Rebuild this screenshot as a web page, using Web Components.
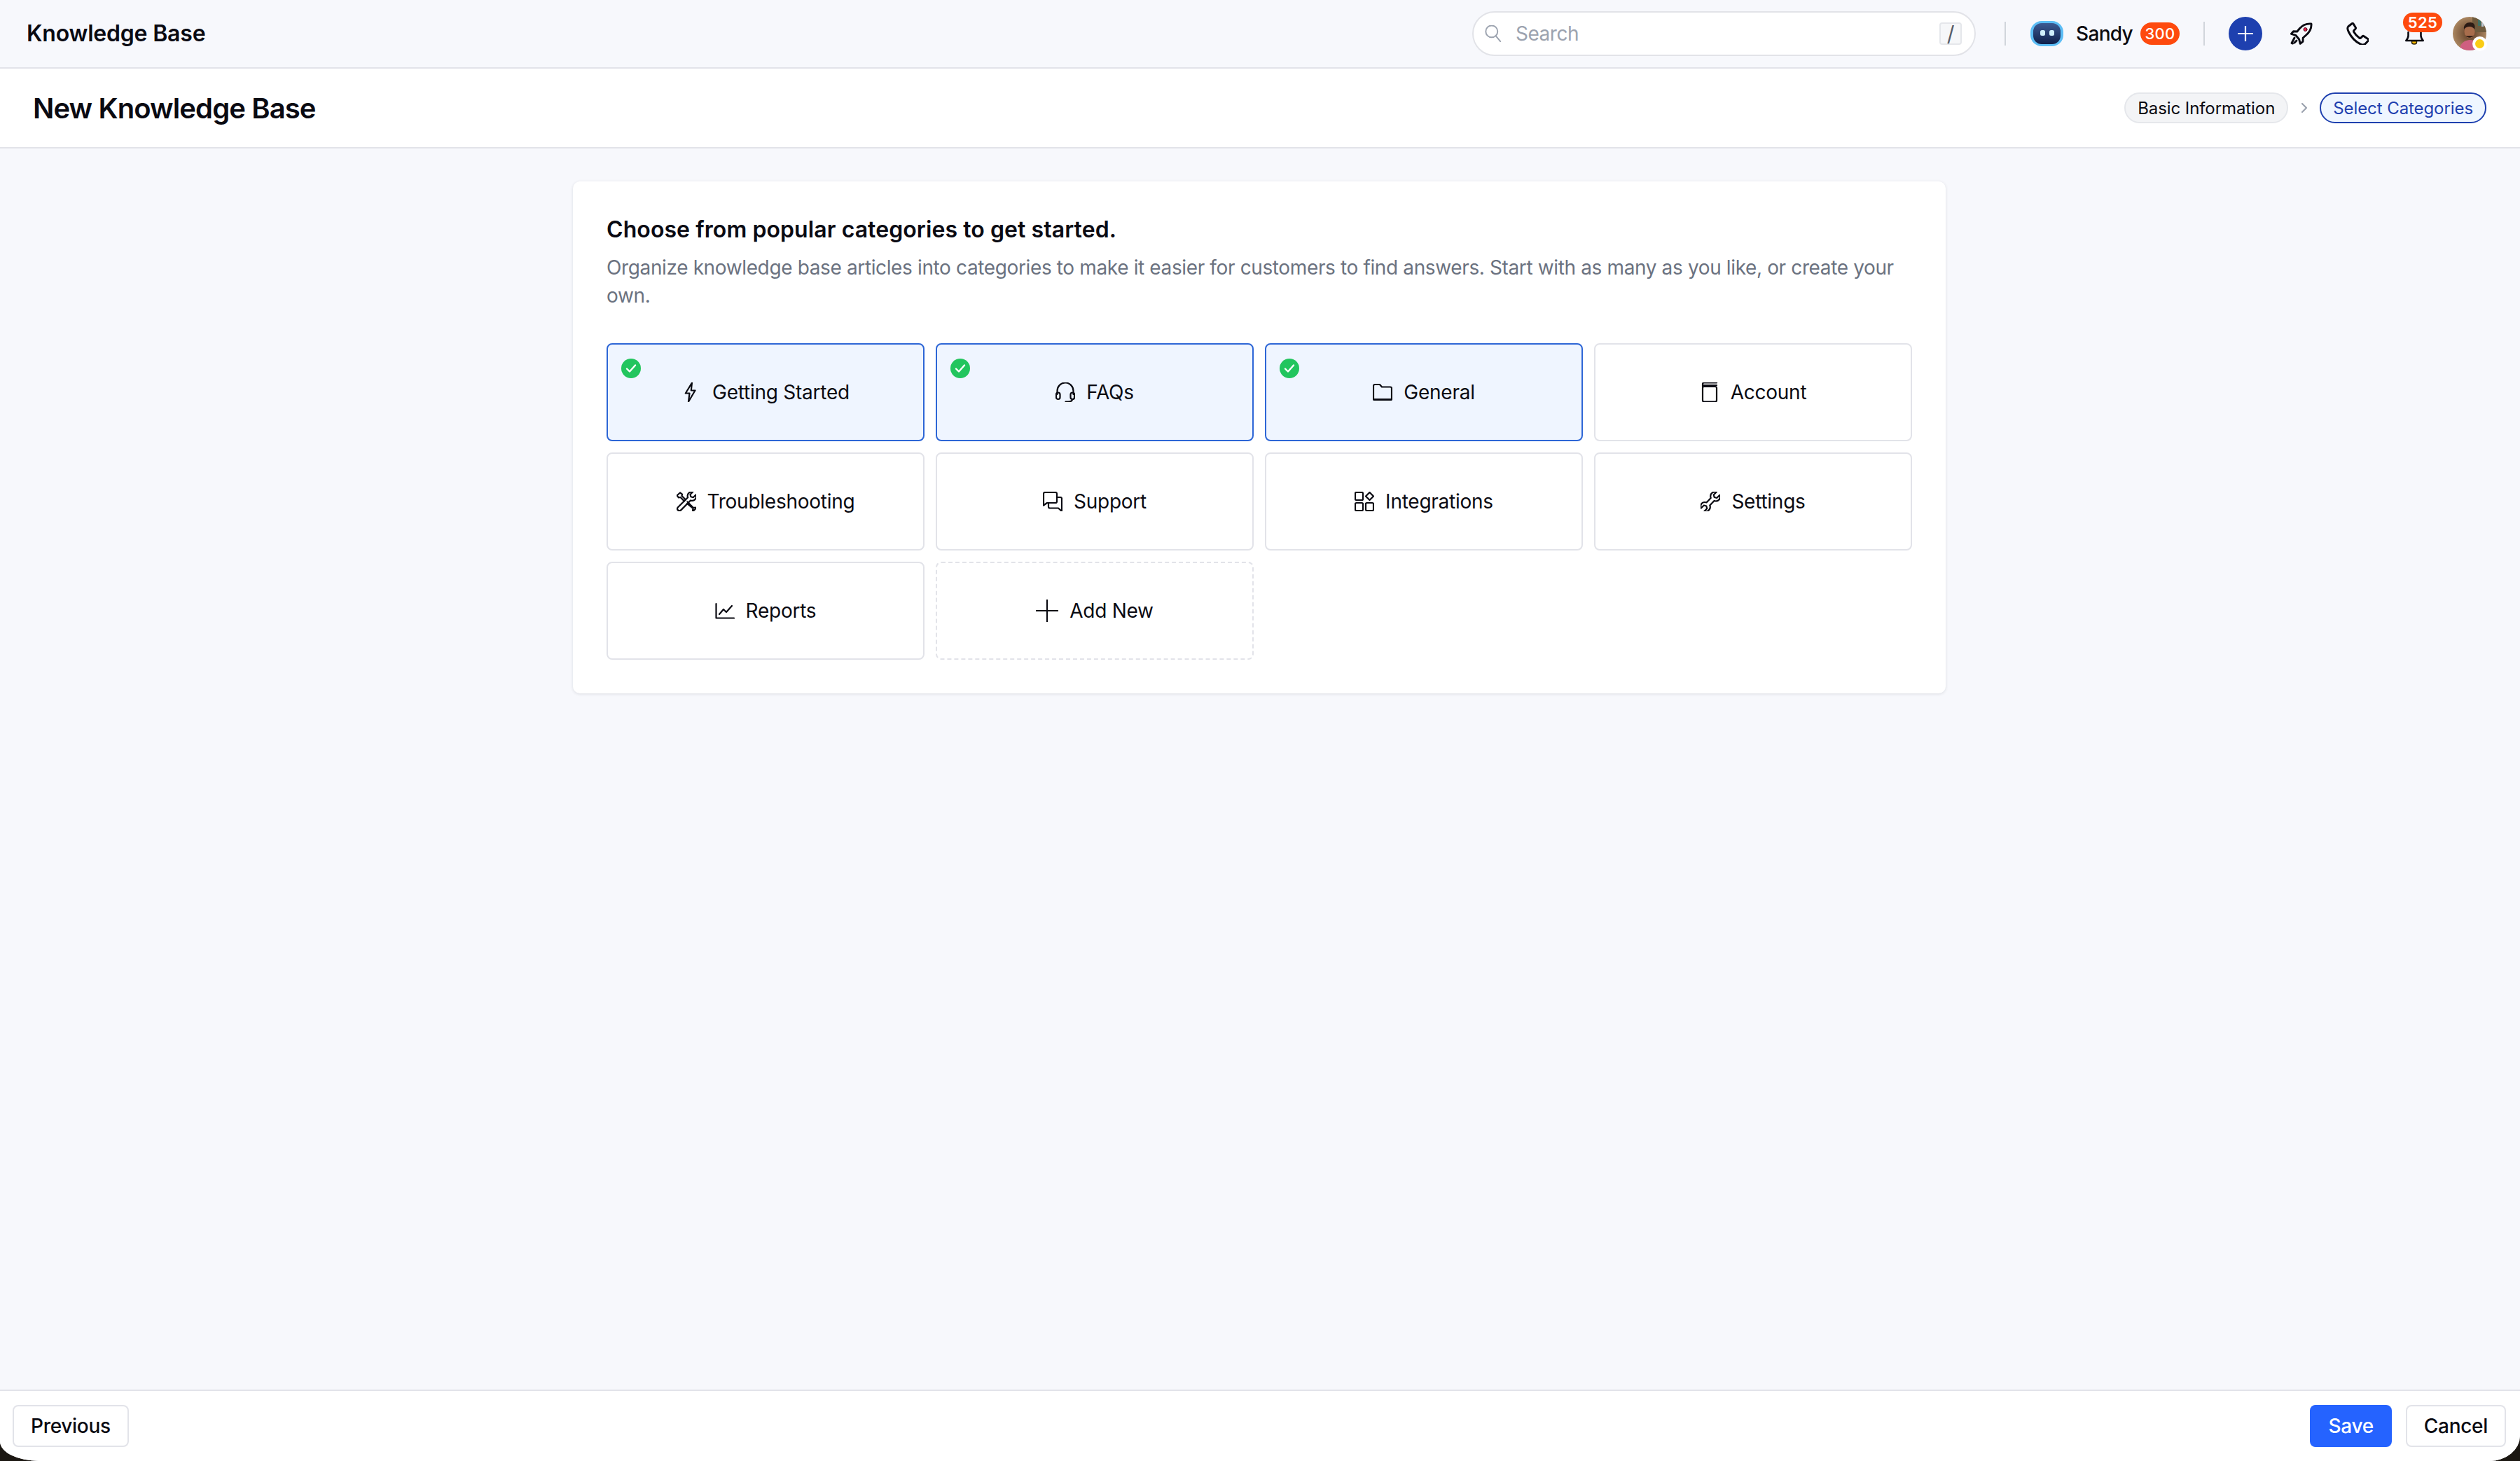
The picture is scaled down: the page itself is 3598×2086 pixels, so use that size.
<!DOCTYPE html>
<html lang="en"><head><meta charset="utf-8"><title>New Knowledge Base</title>
<style>
html,body{margin:0;padding:0;height:100%;background:#1b1712;}
body{font-family:Inter,"Noto Sans",sans-serif;color:#0a0a0f;}
</style></head><body>
<kb-app>
  <kb-topbar slot="top" heading="Knowledge Base"></kb-topbar>
  <kb-pagehead slot="head" heading="New Knowledge Base">
    <kb-step>Basic Information</kb-step>
    <kb-step active>Select Categories</kb-step>
  </kb-pagehead>
  <kb-card heading="Choose from popular categories to get started." desc="Organize knowledge base articles into categories to make it easier for customers to find answers. Start with as many as you like, or create your own.">
    <kb-tile selected icon="bolt">Getting Started</kb-tile>
    <kb-tile selected icon="headset">FAQs</kb-tile>
    <kb-tile selected icon="folder">General</kb-tile>
    <kb-tile icon="book">Account</kb-tile>
    <kb-tile icon="tools">Troubleshooting</kb-tile>
    <kb-tile icon="chat">Support</kb-tile>
    <kb-tile icon="apps">Integrations</kb-tile>
    <kb-tile icon="wrench">Settings</kb-tile>
    <kb-tile icon="chart">Reports</kb-tile>
    <kb-tile dashed icon="plus" style="--s:32px">Add New</kb-tile>
  </kb-card>
  <kb-footer slot="foot">
    <kb-button slot="left">Previous</kb-button>
    <kb-button slot="right" primary>Save</kb-button>
    <kb-button slot="right">Cancel</kb-button>
  </kb-footer>
</kb-app>
<script>
const ICONS={
 bolt:'<path d="M17 2.500 7.800 17.500H13.500L12 29.500 21.500 13.500H15.800Z"/>',
 headset:'<path d="M4.500 19v-5a11.500 11.500 0 0 1 23 0v5"/><rect x="3" y="16.500" width="5.500" height="9.500" rx="2.700"/><rect x="23.500" y="16.500" width="5.500" height="9.500" rx="2.700"/><path d="M26 26c0 2.600-3 3.500-6 3.500h-3.500"/>',
 folder:'<path d="M3 7a2 2 0 0 1 2-2h7l3 3.500h12a2 2 0 0 1 2 2V25a2 2 0 0 1-2 2H5a2 2 0 0 1-2-2Z"/><path d="M3.500 26.500h25" stroke-width="2.800"/>',
 book:'<rect x="6" y="8" width="20" height="21.500" rx="2"/><path d="M6 8V4.500a2 2 0 0 1 2-2h18M6 6h20"/>',
 tools:'<path d="M13 15.500 7.500 10 5 10.500 2.500 7.500 7 3.500l3 2.200-.5 2.300 5.500 5.500"/><path d="M17.500 16.500 26 25l3-.5 .5 1.500-3.500 3.500-1-.5.500-3L17 19"/><path d="M29.500 6.500l-3.800 3.700-3.300-.9-.9-3.300L25.200 2.300c-3.800-1-7.600 1.900-7.600 5.700 0 .9.200 1.600.5 2.300L4 24.200c-1.200 1.200-1.200 3 0 4.200s3 1.200 4.200 0L22 14.400c.7.300 1.400.5 2.300.5 3.800 0 6.700-3.800 5.200-8.400Z"/>',
 chat:'<path d="M3 5a2 2 0 0 1 2-2h15a2 2 0 0 1 2 2v11a2 2 0 0 1-2 2H8l-5 3.500Z"/><path d="M22 10h5a2 2 0 0 1 2 2v18l-5-4.500H12a2 2 0 0 1-2-2V18"/>',
 apps:'<rect x="3" y="3" width="11" height="11" rx="1.500"/><path d="M23.500 3 29 8.500 23.500 14 18 8.500Z"/><rect x="3" y="18" width="11" height="11" rx="1.500"/><rect x="18" y="18" width="11" height="11" rx="1.500"/>',
 wrench:'<path d="M29.200 7l-4 4-3.500-1-1-3.500 4-4c-4-1.200-8.500 1.700-8.500 6 0 1 .2 1.700.5 2.500L10.500 17.500c-.8-.3-1.500-.5-2.500-.5-4.300 0-7 4-5.200 8.500l4-4 3.500 1 1 3.500-4 4c4 1.200 8.500-1.700 8.500-6 0-1-.2-1.700-.5-2.500L21.500 15c.8.300 1.500.5 2.500.5 4.300 0 7-4 5.200-8.500Z"/>',
 chart:'<path d="M3.500 6v20.500H29"/><path d="M8 21l6-7 4 4 8-9"/>',
 plus:'<path d="M16 0v32M0 16h32"/>',
 search:'<circle cx="13.500" cy="13" r="9.500"/><path d="M20 20l7.500 9"/>',
 phone:'<path d="M9 3.500 4.500 7c-1.500 1.500-1 4 .5 7 3 6 8.500 12 14.500 15 2.500 1.300 5 1 6.500-.5l3.500-3.800c.5-.6.4-1.500-.3-2l-5.200-3.500c-.6-.4-1.400-.3-1.900.2l-1.800 1.800c-.5.500-1.300.6-1.900.2-3-2-5.300-4.500-7-7.600-.3-.6-.2-1.400.3-1.900l1.700-1.800c.5-.5.5-1.200.2-1.800L11 4c-.4-.8-1.300-1-2-.5Z" stroke-width="2.600"/>',
};
const VIEW={plus:'0 0 32 32',search:'3 3 26 27',phone:'2 2 28 28'};
function define(name,css,html){
  customElements.define(name,class extends HTMLElement{
    connectedCallback(){
      if(this.shadowRoot)return;
      const s=this.attachShadow({mode:'open'});
      s.innerHTML='<style>'+css+'</style>'+(typeof html==='function'?html(this):html);
    }
  });
}
define('kb-icon',`:host{display:inline-flex;flex:none;width:var(--s,28px);height:var(--s,28px)}
 svg{width:100%;height:100%;fill:none;stroke:currentColor;stroke-width:var(--sw,2.200);stroke-linecap:round;stroke-linejoin:round;display:block}`,
 el=>{const n=el.getAttribute('name');return `<svg viewBox="${VIEW[n]||'2 2 28 28'}" aria-hidden="true">${ICONS[n]||''}</svg>`;});

define('kb-app',`:host{display:flex;flex-direction:column;height:100vh;overflow:hidden;background:#f7f8fc;
   border-radius:0 0 44px 56px / 0 0 36px 28px}
 .main{flex:1;min-height:0;display:flex;justify-content:center;align-items:flex-start;padding-top:47px}`,
 `<slot name="top"></slot><slot name="head"></slot><div class="main"><slot></slot></div><slot name="foot"></slot>`);

define('kb-topbar',`:host{display:flex;align-items:center;height:96px;box-sizing:content-box;border-bottom:2px solid #e2e3e9;background:#f7f8fc;padding:0 48px 0 38px}
 h1{margin:0;font-size:32px;font-weight:600;line-height:40px;letter-spacing:-.2px;flex:1;color:#0a0a12}
 .search{width:719px;height:64px;box-sizing:border-box;border:2px solid #e2e3e8;border-radius:32px;background:#fff;display:flex;align-items:center;padding:0 18px 0 16px;gap:20px;color:#9ca3af;font-size:28px;margin-right:41px}
 .search kb-icon{--s:24px;--sw:2.200;color:#9ca3af}
 .search span{flex:1;letter-spacing:-.5px}
 kbd{width:32px;height:32px;box-sizing:border-box;border:2px solid #e5e7eb;border-radius:4px;background:#f6f7f9;color:#565c68;font:400 30px/28px Inter,sans-serif;text-align:center}
 .sep{width:2px;height:34px;background:#d1d5db;flex:none}
 .user{display:flex;align-items:center;margin:0 34px 0 35px}
 .user svg{width:47px;height:36px;display:block;margin-right:18px}
 .user b{font-size:28px;font-weight:500;line-height:36px;margin-right:11px;letter-spacing:-.7px}
 .pill{display:inline-flex;align-items:center;justify-content:center;background:#fe4a0e;color:#fff;font-weight:500;border-radius:16px;font-size:22px;height:32px;width:56px;letter-spacing:.3px}
 .plus{width:48px;height:48px;border-radius:50%;background:#1e40af;color:#fff;display:flex;align-items:center;justify-content:center;margin-left:34px}
 .plus kb-icon{--s:22px;--sw:3.200}
 .ic{display:flex;color:#0a0a12;--s:32px}
 .rocket{margin-left:40px;width:32px}
 .phone{margin-left:48px;width:32px}
 .bell{position:relative;margin-left:52px;width:26px;height:32px}
 .bell svg{position:absolute;left:0;top:14px;width:27px;height:18px;overflow:visible}
 .bell .pill{position:absolute;left:-3px;top:-14px;height:28px;width:56px;border-radius:14px;font-weight:600;font-size:22px}
 .avatar{position:relative;margin-left:42px;width:48px;height:48px}
 .avatar svg{width:48px;height:48px;display:block;border-radius:50%}
 .avatar i{position:absolute;left:28px;top:28px;width:13px;height:13px;border-radius:50%;background:#facc15;border:4px solid #fff}`,
 el=>`<h1>${el.getAttribute('heading')}</h1>
 <div class="search"><kb-icon name="search"></kb-icon><span>Search</span><kbd>/</kbd></div>
 <div class="sep"></div>
 <div class="user"><svg viewBox="0 0 47 36"><defs><linearGradient id="bg" x1="0" y1="0" x2="0" y2="1"><stop offset="0" stop-color="#3c5a93"/><stop offset="1" stop-color="#0f1f4a"/></linearGradient></defs><rect x="0" y="0" width="47" height="36" rx="16" fill="#5cbdf5"/><rect x="4" y="3" width="39" height="30" rx="12" fill="url(#bg)"/><rect x="14" y="13" width="7" height="8" rx="2.500" fill="#cfeefc"/><rect x="27" y="13" width="7" height="8" rx="2.500" fill="#cfeefc"/></svg><b>Sandy</b><span class="pill">300</span></div>
 <div class="sep"></div>
 <div class="plus"><kb-icon name="plus"></kb-icon></div>
 <div class="ic rocket"><svg viewBox="0 0 32 32" width="32" height="32" fill="none" stroke="#0a0a12" stroke-width="2.900" stroke-linecap="round" stroke-linejoin="round"><path d="M30 2c-6-.5-12 1.500-16.500 6.500L9.800 13l-5.300-.2-3 3.500 6.200 2 5 6 1.500 6 3.800-3 .2-5.300 4.500-4C28 13.500 30.500 8 30 2Z"/><path d="M6 22l-4 7.500 1.500.5M9 26l-3 3"/><circle cx="21.500" cy="10" r="2.500" fill="#e11d48" stroke="#4a0d1e" stroke-width="1"/></svg></div>
 <div class="ic phone"><kb-icon name="phone"></kb-icon></div>
 <div class="bell"><svg viewBox="0 0 27 18" fill="none" stroke="#0a0a12" stroke-width="2.600" stroke-linecap="round" stroke-linejoin="round"><path d="M9.500 12.500v2c0 1.500 1.500 2.500 3.500 2.500s3.500-1 3.500-2.500v-2Z" fill="#f5b700" stroke="#2a2208" stroke-width="1.400"/><path d="M4.500 0v5c0 2.500-1.200 4.500-3.200 7h24.400C23.700 9.500 22.500 7.500 22.500 5V0"/></svg><span class="pill">525</span></div>
 <div class="avatar"><svg viewBox="0 0 48 48"><defs><radialGradient id="wall" cx=".5" cy=".5" r=".7"><stop offset="0" stop-color="#5c3a24"/><stop offset="1" stop-color="#c9a478"/></radialGradient></defs><rect width="48" height="48" fill="url(#wall)"/><rect x="28" y="0" width="20" height="22" fill="#6e5a3d"/><rect x="36" y="4" width="4" height="9" fill="#3f6f62"/><rect x="41" y="5" width="3" height="9" fill="#b9c7d6"/><path d="M10 48c0-10 6-14 14-15 8 0 15 4 16 15Z" fill="#cf5f80"/><ellipse cx="24" cy="21" rx="7.500" ry="9.500" fill="#a86d4c"/><path d="M16 18c-1-7 4-10 9-10s8 4 6 10c-2-3-4-4-7-4s-6 1-8 4Z" fill="#2b1b14"/><path d="M18 26c2 5 10 5 12 0-1 2-3 1-6 1s-5 1-6-1Z" fill="#2b1b14"/></svg><i></i></div>`);

define('kb-pagehead',`:host{display:flex;align-items:center;height:112px;box-sizing:content-box;background:#fff;border-bottom:2px solid #e2e3e9;padding:0 48px 0 47px;}
 h2{margin:0;font-size:40px;font-weight:600;line-height:50px;flex:1;color:#0a0a12;letter-spacing:-.9px;padding-top:1px}
 .steps{display:flex;align-items:center;gap:18px}`,
 el=>`<h2>${el.getAttribute('heading')}</h2><div class="steps"><slot></slot></div>`);

define('kb-step',`:host{display:inline-flex;align-items:center}
 .c{width:10px;height:18px;margin:0 17px 0 0;color:#9ca3af;display:none}
 :host([active]) .c{display:block}
 span{display:inline-flex;align-items:center;height:44px;box-sizing:border-box;padding:0 17px;border-radius:22px;border:2px solid #e5e7eb;background:#f3f4f6;color:#0a0a12;font-size:24px;font-weight:400;letter-spacing:-.08px}
 :host([active]) span{border-color:#1e40af;background:#eff6ff;color:#1e40af}`,
 `<svg class="c" viewBox="0 0 10 18" fill="none" stroke="currentColor" stroke-width="2.200" stroke-linecap="round" stroke-linejoin="round"><path d="M2 3l6 6-6 6"/></svg><span><slot></slot></span>`);

define('kb-card',`:host{display:block;width:1960px;margin-right:2px;box-sizing:border-box;background:#fff;border-radius:10px;padding:48px;box-shadow:0 1px 4px rgba(16,24,40,.12)}
 h3{margin:0 0 14px;font-size:32px;font-weight:600;line-height:41px;padding-top:0;color:#0a0a12;letter-spacing:.08px}
 p{margin:0 0 48px;font-size:28px;line-height:40px;color:#6b7280;letter-spacing:-.37px}
 .grid{display:grid;grid-template-columns:repeat(4,1fr);grid-auto-rows:140px;gap:16px}`,
 el=>`<h3>${el.getAttribute('heading')}</h3><p>${el.getAttribute('desc')}</p><div class="grid"><slot></slot></div>`);

define('kb-tile',`:host{position:relative;display:flex;align-items:center;justify-content:center;gap:16px;box-sizing:border-box;border:2px solid #e2e3e9;border-radius:8px;background:#fff;font-size:28px;line-height:40px;color:#0a0a12;letter-spacing:-.25px}
 :host([selected]){border-color:#2d66d6;background:#eff5ff}
 :host([dashed]){border-style:dashed}
 .chk{display:none;position:absolute;left:19px;top:20px;width:28px;height:28px}
 :host([selected]) .chk{display:block}`,
 el=>`<svg class="chk" viewBox="0 0 28 28"><circle cx="14" cy="14" r="14" fill="#22c55e"/><path d="M8 14.500l4 4 8-9" fill="none" stroke="#fff" stroke-width="2.400" stroke-linecap="round" stroke-linejoin="round"/></svg><kb-icon name="${el.getAttribute('icon')}"></kb-icon><span><slot></slot></span>`);

define('kb-footer',`:host{display:flex;align-items:center;justify-content:space-between;height:102px;box-sizing:border-box;background:#fff;border-top:2px solid #e2e3e9;padding:0 20px 0 18px}
 .r{display:flex;gap:20px}`,
 `<slot name="left"></slot><div class="r"><slot name="right"></slot></div>`);

define('kb-button',`:host{display:inline-flex;align-items:center;height:60px;box-sizing:border-box;padding:0 24px;border:2px solid #e2e3e9;border-radius:8px;background:#fff;color:#0a0a12;font-size:28px;font-weight:500;letter-spacing:-.3px}
 :host([primary]){background:#2563ff;border-color:#2563ff;color:#fff}`,
 `<slot></slot>`);
</script>
</body></html>
